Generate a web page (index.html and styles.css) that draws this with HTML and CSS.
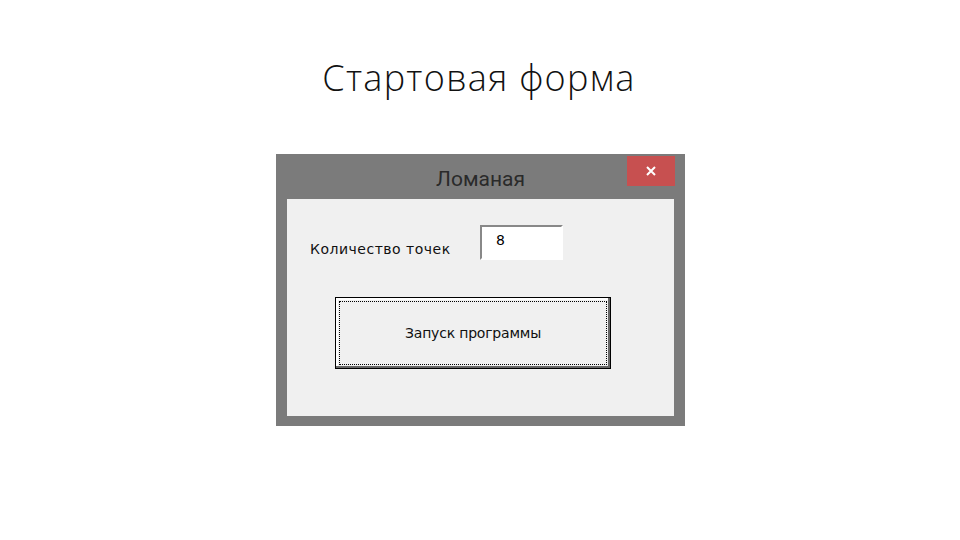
FILE: index.html
```html
<!DOCTYPE html>
<html lang="ru">
<head>
    <meta charset="UTF-8">
    <title>Стартовая форма</title>
    <link rel="stylesheet" href="styles.css">
</head>
<body>
    <div class="slide">
        <h1 class="slide-title">Стартовая форма</h1>

        <div class="window">
            <div class="titlebar">
                <span class="caption">Ломаная</span>
                <button class="close">
                    <svg width="12" height="12" viewBox="0 0 12 12">
                        <path d="M2 2 L10 10 M10 2 L2 10" stroke="#fff" stroke-width="2"/>
                    </svg>
                </button>
            </div>
            <div class="client">
                <div class="row">
                    <label for="points">Количество точек</label>
                    <input type="text" id="points" value="8">
                </div>
                <button class="run"><span>Запуск программы</span></button>
            </div>
        </div>
    </div>
</body>
</html>
```

FILE: styles.css
```css
*{
    padding: 0;
    margin: 0;
    box-sizing: border-box;
}
body{
    background-color: #fff;
}
.slide{
    width: 960px;
    height: 540px;
    display: flex;
    flex-direction: column;
    align-items: center;
}
.slide-title{
    font-family: "Open Sans", sans-serif;
    font-weight: 300;
    font-size: 36px;
    letter-spacing: 1.3px;
    color: #111;
    margin-top: 54px;
    margin-left: -2px;
    line-height: 48px;
}
.window{
    margin-top: 52px;
    margin-left: 1px;
    width: 409px;
    height: 272px;
    background-color: #7b7b7b;
    display: flex;
    flex-direction: column;
    padding: 0 11px 10px 11px;
}
.titlebar{
    height: 45px;
    position: relative;
    display: flex;
    align-items: center;
    justify-content: center;
}
.caption{
    font-family: "Roboto", sans-serif;
    font-size: 21px;
    color: #2a2a2a;
    margin-top: 4px;
}
.close{
    position: absolute;
    right: -1px;
    top: 2px;
    width: 48px;
    height: 30px;
    border: none;
    background-color: #c75050;
    display: flex;
    align-items: center;
    justify-content: center;
}
.client{
    flex: 1;
    background-color: #f0f0f0;
    display: flex;
    flex-direction: column;
    padding: 26px 0 0 23px;
}
.row{
    display: flex;
    align-items: center;
    height: 34px;
}
.row label{
    font-family: "DejaVu Sans", sans-serif;
    font-size: 14px;
    letter-spacing: 0.5px;
    color: #111;
    width: 170px;
    margin-top: 13px;
}
.row input{
    width: 83px;
    height: 35px;
    border: 2px solid #fff;
    border-top-color: #888;
    border-left-color: #888;
    background-color: #fff;
    font-family: "DejaVu Sans", sans-serif;
    font-size: 14px;
    padding: 0 0 4px 14px;
    outline: none;
}
.run{
    margin-top: 38px;
    margin-left: 25px;
    width: 276px;
    height: 72px;
    background-color: #f0f0f0;
    border: 1px solid #000;
    box-shadow: inset -2px -2px 0 #666, inset 2px 2px 0 #fff;
    padding: 3px;
    display: flex;
}
.run span{
    flex: 1;
    border: 1px dotted #000;
    display: flex;
    align-items: center;
    justify-content: center;
    font-family: "DejaVu Sans", sans-serif;
    font-size: 14px;
    letter-spacing: -0.2px;
    color: #111;
}
```
